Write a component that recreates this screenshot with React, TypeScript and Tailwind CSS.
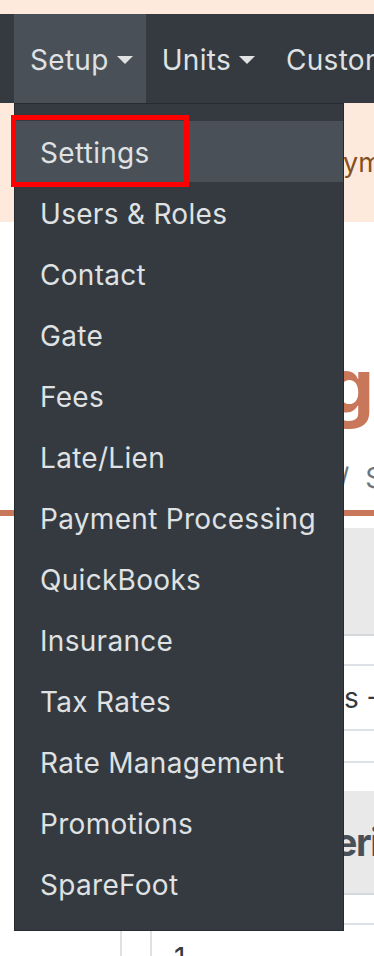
const menuItems = [
  "Settings",
  "Users & Roles",
  "Contact",
  "Gate",
  "Fees",
  "Late/Lien",
  "Payment Processing",
  "QuickBooks",
  "Insurance",
  "Tax Rates",
  "Rate Management",
  "Promotions",
  "SpareFoot",
]

function Caret() {
  return <span className="ml-[8px] inline-block h-0 w-0 shrink-0 border-x-[8px] border-t-[8px] border-x-transparent border-t-[#dfe1e3]" />
}

export default function App() {
  return (
    <div
      className="relative h-[956px] w-[374px] overflow-hidden bg-white"
      style={{ fontFamily: "Inter, 'Liberation Sans', sans-serif" }}
    >
      {/* top strip */}
      <div className="h-[14px] bg-[#fdeadc]" />

      {/* navbar */}
      <nav className="flex h-[89px] items-stretch whitespace-nowrap bg-[#343a40] pl-[14px] pt-[3px] text-[28px] tracking-[0.3px] text-[#dfe1e3]">
        <div className="-mt-[3px] flex shrink-0 items-center bg-[#495057] pl-[16px] pr-[13px] pt-[3px]">
          Setup
          <Caret />
        </div>
        <div className="flex shrink-0 items-center px-[16px]">
          Units
          <Caret />
        </div>
        <div className="flex shrink-0 items-center pl-[15px]">Customers</div>
      </nav>

      {/* alert */}
      <div className="flex h-[119px] items-center whitespace-nowrap bg-[#fdeadc] pl-[311px] pt-[2px] text-[27px] text-[#85501f]">
        Payments are not set up
      </div>

      {/* page heading */}
      <div className="whitespace-nowrap pl-[110px] pt-[118px] text-[76px] font-bold leading-[90px] text-[#c8775a]">
        Settings
      </div>
      <div className="mt-[28px] flex whitespace-nowrap pl-[202px] text-[28px] leading-[40px] text-[#6c757d]">
        <span>Overview</span>
        <span className="pl-[12px] pr-[16px]">/</span>
        <span>Setup</span>
      </div>
      <div className="mt-[12px] h-[6px] bg-[#c8775a]" />

      {/* table */}
      <div className="mt-[12px] ml-[120px] border-l-2 border-[#dee2e6]">
        <div className="ml-[28px] border-l-2 border-[#dee2e6]">
          <div className="h-[108px] border-b-2 border-[#d5d8db] bg-[#e9e9e9]" />
          <div className="h-[30px] border-b-2 border-[#dee2e6]" />
          <div className="flex h-[65px] items-center whitespace-nowrap border-b-2 border-[#dee2e6] pl-[102px] text-[28px] text-[#343a40]">
            Tenants - All
          </div>
          <div className="h-[32px] border-b-2 border-[#dee2e6]" />
          <div className="h-[28px]" />
          <div className="flex h-[104px] items-center whitespace-nowrap border-b-2 border-[#d5d8db] bg-[#e9e9e9] pl-[160px] text-[38px] font-bold tracking-[-1.5px] text-[#495057]">
            Periods
          </div>
          <div className="h-[30px] border-b-2 border-[#dee2e6]" />
          <div className="pl-[22px] pt-[12px] text-[28px] text-[#343a40]">1</div>
        </div>
      </div>

      {/* dropdown menu */}
      <div className="absolute left-[14px] top-[103px] w-[330px] border border-[rgba(0,0,0,0.25)] bg-[#343a40] pb-[16px] pt-[17px]">
        {menuItems.map((item, i) => (
          <div
            key={item}
            className={`flex h-[61px] items-center whitespace-nowrap pl-[25px] pt-[3px] text-[28px] tracking-[0.3px] text-[#dfe1e3] ${i === 0 ? "bg-[#495057]" : ""}`}
          >
            {item}
          </div>
        ))}
      </div>

      {/* highlight box */}
      <div className="absolute left-[11px] top-[115px] h-[72px] w-[178px] border-[5px] border-[#ff0000]" />
    </div>
  )
}
